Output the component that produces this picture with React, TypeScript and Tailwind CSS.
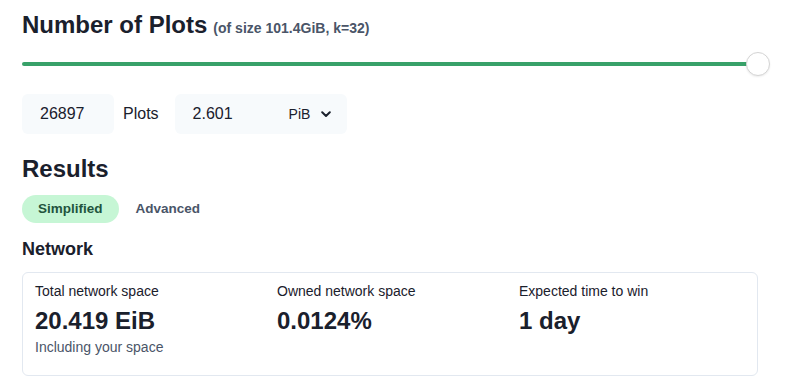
import React from "react";

const stats = [
  { label: "Total network space", value: "20.419 EiB", help: "Including your space" },
  { label: "Owned network space", value: "0.0124%", help: "" },
  { label: "Expected time to win", value: "1 day", help: "" },
];

export default function App() {
  const [tab, setTab] = React.useState("simplified");

  return (
    <div className="min-h-screen bg-white px-[22px] pt-[10px] text-[#1a202c]" style={{ fontFamily: '"Liberation Sans", Arial, sans-serif' }}>
      {/* Title */}
      <h1 className="text-[24px] font-bold leading-[29px]">
        Number of Plots
        <span className="ml-[6px] text-[14px] leading-none text-[#4a5568]">(of size 101.4GiB, k=32)</span>
      </h1>

      {/* Slider */}
      <div className="relative mt-[13px] flex h-[24px] w-[736px] items-center">
        <div className="h-[4px] w-full rounded-full bg-[#38a169]" />
        <div className="absolute right-[-12px] top-0 h-[24px] w-[24px] rounded-full border border-[#d4d4d4] bg-white shadow-[0_1px_2px_rgba(0,0,0,0.08)]" />
      </div>

      {/* Inputs */}
      <div className="mt-[18px] flex items-center">
        <div className="flex h-[40px] w-[92px] items-center rounded-md bg-[#f7fafc] pl-[18px] text-[16px]">26897</div>
        <span className="ml-[9px] mr-[16px] text-[16px]">Plots</span>
        <div className="flex h-[40px] w-[172px] items-center rounded-md bg-[#f7fafc] pl-[18px] text-[16px]">
          <span className="w-[96px]">2.601</span>
          <span className="text-[14px]">PiB</span>
          <svg className="ml-[11px]" width="10" height="7" viewBox="0 0 10 7">
            <path d="M1.2 1.3 L5 5 L8.8 1.3" fill="none" stroke="#1a202c" strokeWidth="2" strokeLinecap="round" strokeLinejoin="round" />
          </svg>
        </div>
      </div>

      {/* Results */}
      <h2 className="mt-[20px] text-[24px] font-bold leading-[29px]">Results</h2>
      <div className="mt-[12px] flex">
        <button
          onClick={() => setTab("simplified")}
          className={`h-[28px] rounded-full px-[16px] text-[13.5px] font-bold ${tab === "simplified" ? "bg-[#c6f6d5] text-[#22543d]" : "text-[#4a5568]"}`}
        >
          Simplified
        </button>
        <button
          onClick={() => setTab("advanced")}
          className={`ml-[1px] h-[28px] rounded-full px-[16px] text-[13.5px] font-bold ${tab === "advanced" ? "bg-[#c6f6d5] text-[#22543d]" : "text-[#4a5568]"}`}
        >
          Advanced
        </button>
      </div>

      {/* Network */}
      <h3 className="mt-[15px] text-[18px] font-bold leading-[22px]">Network</h3>
      <div className="mt-[12px] w-[736px] rounded-md border border-[#e2e8f0] px-[12px] pb-[18px] pt-[8px]">
        <div className="grid grid-cols-[242px_242px_1fr]">
          {stats.map((s) => (
            <div key={s.label}>
              <div className="text-[14px] leading-[20px]">{s.label}</div>
              <div className="mt-[4px] text-[24px] font-bold leading-[32px]">{s.value}</div>
              {s.help && <div className="text-[14px] leading-[20px] text-[#4a5568]">{s.help}</div>}
            </div>
          ))}
        </div>
      </div>
    </div>
  );
}
